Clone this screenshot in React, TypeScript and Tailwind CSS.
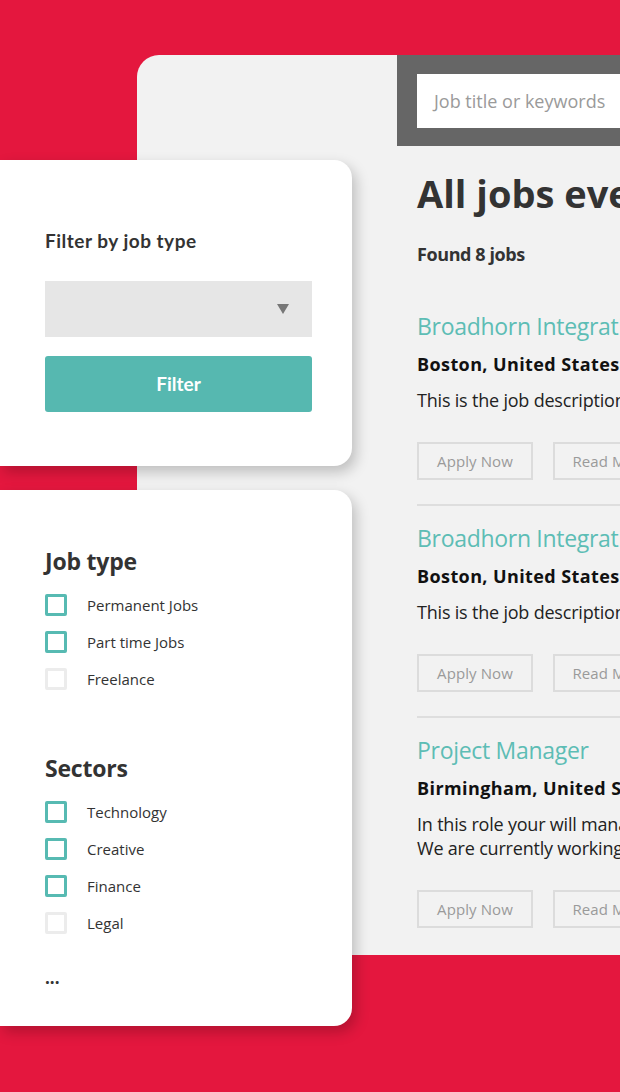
const jobs = [
  {
    title: 'Broadhorn Integration Engineer',
    location: 'Boston, United States',
    description: ['This is the job description for this role'],
  },
  {
    title: 'Broadhorn Integration Engineer',
    location: 'Boston, United States',
    description: ['This is the job description for this role'],
  },
  {
    title: 'Project Manager',
    location: 'Birmingham, United States',
    description: ['In this role your will manage the delivery of projects', 'We are currently working with a leading agency'],
  },
];

const jobTypes = [
  { label: 'Permanent Jobs', checked: true },
  { label: 'Part time Jobs', checked: true },
  { label: 'Freelance', checked: false },
];

const sectors = [
  { label: 'Technology', checked: true },
  { label: 'Creative', checked: true },
  { label: 'Finance', checked: true },
  { label: 'Legal', checked: false },
];

const CheckRow = ({ label, checked }: { label: string; checked: boolean }) => (
  <div className="flex h-[22px] items-center gap-[20px]">
    <span
      className={
        checked
          ? 'h-[22px] w-[22px] rounded-[2px] border-[3px] border-[#57bab2] bg-white'
          : 'h-[22px] w-[22px] rounded-[2px] border-[3px] border-[#ececec] bg-white'
      }
    />
    <span className="text-[15px] tracking-[0px] text-[#333]">{label}</span>
  </div>
);

const JobItem = ({ job, last }: { job: (typeof jobs)[number]; last?: boolean }) => (
  <div className={last ? 'pb-[24px] pt-[17px]' : 'border-b-2 border-[#dedede] pb-[24px] pt-[17px]'}>
    <p className="text-[23px] leading-[30px] tracking-[-0.3px] text-[#5dbdb5]">{job.title}</p>
    <p className="mt-[11px] text-[18px] font-bold leading-[24px] tracking-[0.4px] text-[#111]">{job.location}</p>
    <div className="mt-[12px] text-[18px] leading-[24px] tracking-[-0.2px] text-[#222]">
      {job.description.map((line) => (
        <p key={line}>{line}</p>
      ))}
    </div>
    <div className="mt-[30px] flex gap-[20px]">
      <button className="h-[38px] w-[116px] shrink-0 border-2 border-[#dcdcdc] text-[15px] tracking-[0.1px] text-[#9a9a9a]">
        Apply Now
      </button>
      <button className="h-[38px] w-[116px] shrink-0 border-2 border-[#dcdcdc] text-[15px] tracking-[0.1px] text-[#9a9a9a]">
        Read More
      </button>
    </div>
  </div>
);

export default function App() {
  return (
    <div
      className="relative h-[1092px] w-[620px] overflow-hidden whitespace-nowrap bg-[#e4173e]"
      style={{ fontFamily: '"Open Sans", sans-serif' }}
    >
      <div className="ml-[137px] mt-[55px] flex h-[900px] rounded-tl-[22px] bg-[#f2f2f2]">
        <div className="w-[260px] shrink-0" />
        <div className="min-w-0 flex-1">
          <div className="h-[91px] bg-[#666] pl-[20px] pt-[19px]">
            <div className="flex h-[54px] w-[400px] items-center bg-white pl-[17px] text-[18px] text-[#9a9a9a]">
              Job title or keywords
            </div>
          </div>
          <div className="pl-[20px]">
            <h1 className="mt-[25px] text-[38px] font-bold leading-[44px] tracking-[0px] text-[#333]">
              All jobs everywhere
            </h1>
            <p className="mt-[27px] text-[18px] font-bold leading-[24px] tracking-[-0.4px] text-[#333]">Found 8 jobs</p>
            <div className="mt-[28px] -ml-[20px] pl-[20px]">
              {jobs.map((job, i) => (
                <JobItem key={i} job={job} last={i === jobs.length - 1} />
              ))}
            </div>
          </div>
        </div>
      </div>

      <div className="absolute left-0 top-[160px] flex w-[352px] flex-col gap-[24px]">
        <div
          className="h-[306px] rounded-r-[18px] bg-white pl-[45px] pr-[40px] pt-[69px] shadow-[4px_6px_14px_rgba(0,0,0,0.22)]"
          style={{ fontFamily: 'Lato, sans-serif' }}
        >
          <p className="text-[19px] font-bold leading-[24px] tracking-[0.5px] text-[#333]">Filter by job type</p>
          <div className="mt-[28px] flex h-[56px] items-center justify-end bg-[#e6e6e6] pr-[23px]">
            <svg width="12" height="10" viewBox="0 0 12 10">
              <polygon points="0,0 12,0 6,10" fill="#777" />
            </svg>
          </div>
          <button className="mt-[19px] h-[56px] w-full rounded-[3px] bg-[#56b8b0] text-[19px] font-bold text-white">
            Filter
          </button>
        </div>

        <div className="h-[536px] rounded-r-[18px] bg-white pl-[45px] pt-[56px] shadow-[4px_6px_14px_rgba(0,0,0,0.22)]">
          <p className="text-[23px] font-bold leading-[30px] tracking-[-0.2px] text-[#333]">Job type</p>
          <div className="mt-[18px] flex flex-col gap-[15px]">
            {jobTypes.map((item) => (
              <CheckRow key={item.label} {...item} />
            ))}
          </div>
          <p className="mt-[63px] text-[23px] font-bold leading-[30px] tracking-[-0.2px] text-[#333]">Sectors</p>
          <div className="mt-[18px] flex flex-col gap-[15px]">
            {sectors.map((item) => (
              <CheckRow key={item.label} {...item} />
            ))}
          </div>
          <p className="mt-[32px] text-[17px] font-bold leading-[24px] text-[#333]">...</p>
        </div>
      </div>
    </div>
  );
}
